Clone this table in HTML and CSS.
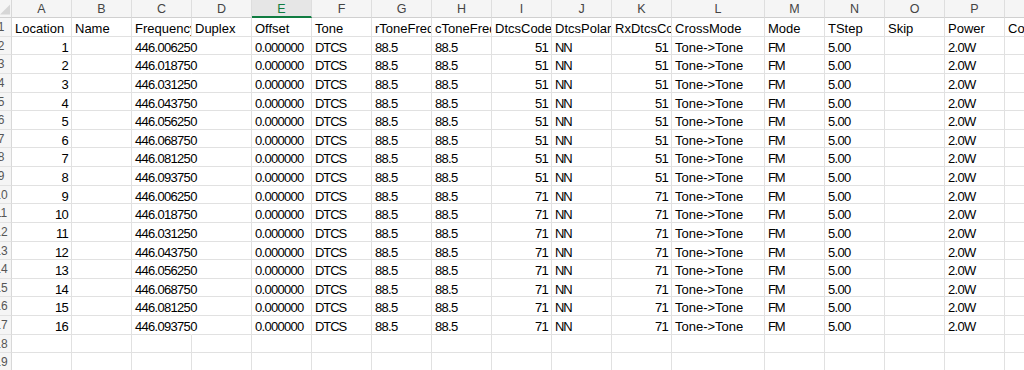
FILE: index.html
```html
<!DOCTYPE html>
<html>
<head>
<meta charset="utf-8">
<link rel="stylesheet" href="styles.css">
</head>
<body>
<div class="sheet">
  <div class="row hdr">
    <div class="corner"><svg width="12" height="17" viewBox="0 0 12 17"><polygon points="11,4 11,15 0,15" fill="#d6d6d6"/></svg></div>
    <div class="ch">A</div><div class="ch">B</div><div class="ch">C</div><div class="ch">D</div><div class="ch sel">E</div><div class="ch">F</div><div class="ch">G</div><div class="ch">H</div><div class="ch">I</div><div class="ch">J</div><div class="ch">K</div><div class="ch wide">L</div><div class="ch">M</div><div class="ch">N</div><div class="ch">O</div><div class="ch">P</div><div class="ch">Q</div>
  </div>
  <div class="row">
    <div class="rh"><span>1</span></div>
    <div class="c">Location</div><div class="c">Name</div><div class="c">Frequency</div><div class="c">Duplex</div><div class="c">Offset</div><div class="c">Tone</div><div class="c">rToneFreq</div><div class="c">cToneFreq</div><div class="c">DtcsCode</div><div class="c">DtcsPolarity</div><div class="c">RxDtcsCode</div><div class="c wide">CrossMode</div><div class="c">Mode</div><div class="c">TStep</div><div class="c">Skip</div><div class="c">Power</div><div class="c">Comment</div>
  </div>
  <div class="row"><div class="rh"><span>2</span></div><div class="c r n">1</div><div class="c"></div><div class="c ov n">446.006250</div><div class="c"></div><div class="c n">0.000000</div><div class="c k">DTCS</div><div class="c n">88.5</div><div class="c n">88.5</div><div class="c r n">51</div><div class="c k">NN</div><div class="c r n">51</div><div class="c wide">Tone-&gt;Tone</div><div class="c k">FM</div><div class="c n">5.00</div><div class="c"></div><div class="c n">2.0W</div><div class="c"></div></div>
  <div class="row"><div class="rh"><span>3</span></div><div class="c r n">2</div><div class="c"></div><div class="c ov n">446.018750</div><div class="c"></div><div class="c n">0.000000</div><div class="c k">DTCS</div><div class="c n">88.5</div><div class="c n">88.5</div><div class="c r n">51</div><div class="c k">NN</div><div class="c r n">51</div><div class="c wide">Tone-&gt;Tone</div><div class="c k">FM</div><div class="c n">5.00</div><div class="c"></div><div class="c n">2.0W</div><div class="c"></div></div>
  <div class="row"><div class="rh"><span>4</span></div><div class="c r n">3</div><div class="c"></div><div class="c ov n">446.031250</div><div class="c"></div><div class="c n">0.000000</div><div class="c k">DTCS</div><div class="c n">88.5</div><div class="c n">88.5</div><div class="c r n">51</div><div class="c k">NN</div><div class="c r n">51</div><div class="c wide">Tone-&gt;Tone</div><div class="c k">FM</div><div class="c n">5.00</div><div class="c"></div><div class="c n">2.0W</div><div class="c"></div></div>
  <div class="row"><div class="rh"><span>5</span></div><div class="c r n">4</div><div class="c"></div><div class="c ov n">446.043750</div><div class="c"></div><div class="c n">0.000000</div><div class="c k">DTCS</div><div class="c n">88.5</div><div class="c n">88.5</div><div class="c r n">51</div><div class="c k">NN</div><div class="c r n">51</div><div class="c wide">Tone-&gt;Tone</div><div class="c k">FM</div><div class="c n">5.00</div><div class="c"></div><div class="c n">2.0W</div><div class="c"></div></div>
  <div class="row"><div class="rh"><span>6</span></div><div class="c r n">5</div><div class="c"></div><div class="c ov n">446.056250</div><div class="c"></div><div class="c n">0.000000</div><div class="c k">DTCS</div><div class="c n">88.5</div><div class="c n">88.5</div><div class="c r n">51</div><div class="c k">NN</div><div class="c r n">51</div><div class="c wide">Tone-&gt;Tone</div><div class="c k">FM</div><div class="c n">5.00</div><div class="c"></div><div class="c n">2.0W</div><div class="c"></div></div>
  <div class="row"><div class="rh"><span>7</span></div><div class="c r n">6</div><div class="c"></div><div class="c ov n">446.068750</div><div class="c"></div><div class="c n">0.000000</div><div class="c k">DTCS</div><div class="c n">88.5</div><div class="c n">88.5</div><div class="c r n">51</div><div class="c k">NN</div><div class="c r n">51</div><div class="c wide">Tone-&gt;Tone</div><div class="c k">FM</div><div class="c n">5.00</div><div class="c"></div><div class="c n">2.0W</div><div class="c"></div></div>
  <div class="row"><div class="rh"><span>8</span></div><div class="c r n">7</div><div class="c"></div><div class="c ov n">446.081250</div><div class="c"></div><div class="c n">0.000000</div><div class="c k">DTCS</div><div class="c n">88.5</div><div class="c n">88.5</div><div class="c r n">51</div><div class="c k">NN</div><div class="c r n">51</div><div class="c wide">Tone-&gt;Tone</div><div class="c k">FM</div><div class="c n">5.00</div><div class="c"></div><div class="c n">2.0W</div><div class="c"></div></div>
  <div class="row"><div class="rh"><span>9</span></div><div class="c r n">8</div><div class="c"></div><div class="c ov n">446.093750</div><div class="c"></div><div class="c n">0.000000</div><div class="c k">DTCS</div><div class="c n">88.5</div><div class="c n">88.5</div><div class="c r n">51</div><div class="c k">NN</div><div class="c r n">51</div><div class="c wide">Tone-&gt;Tone</div><div class="c k">FM</div><div class="c n">5.00</div><div class="c"></div><div class="c n">2.0W</div><div class="c"></div></div>
  <div class="row"><div class="rh"><span>10</span></div><div class="c r n">9</div><div class="c"></div><div class="c ov n">446.006250</div><div class="c"></div><div class="c n">0.000000</div><div class="c k">DTCS</div><div class="c n">88.5</div><div class="c n">88.5</div><div class="c r n">71</div><div class="c k">NN</div><div class="c r n">71</div><div class="c wide">Tone-&gt;Tone</div><div class="c k">FM</div><div class="c n">5.00</div><div class="c"></div><div class="c n">2.0W</div><div class="c"></div></div>
  <div class="row"><div class="rh"><span>11</span></div><div class="c r n">10</div><div class="c"></div><div class="c ov n">446.018750</div><div class="c"></div><div class="c n">0.000000</div><div class="c k">DTCS</div><div class="c n">88.5</div><div class="c n">88.5</div><div class="c r n">71</div><div class="c k">NN</div><div class="c r n">71</div><div class="c wide">Tone-&gt;Tone</div><div class="c k">FM</div><div class="c n">5.00</div><div class="c"></div><div class="c n">2.0W</div><div class="c"></div></div>
  <div class="row"><div class="rh"><span>12</span></div><div class="c r n">11</div><div class="c"></div><div class="c ov n">446.031250</div><div class="c"></div><div class="c n">0.000000</div><div class="c k">DTCS</div><div class="c n">88.5</div><div class="c n">88.5</div><div class="c r n">71</div><div class="c k">NN</div><div class="c r n">71</div><div class="c wide">Tone-&gt;Tone</div><div class="c k">FM</div><div class="c n">5.00</div><div class="c"></div><div class="c n">2.0W</div><div class="c"></div></div>
  <div class="row"><div class="rh"><span>13</span></div><div class="c r n">12</div><div class="c"></div><div class="c ov n">446.043750</div><div class="c"></div><div class="c n">0.000000</div><div class="c k">DTCS</div><div class="c n">88.5</div><div class="c n">88.5</div><div class="c r n">71</div><div class="c k">NN</div><div class="c r n">71</div><div class="c wide">Tone-&gt;Tone</div><div class="c k">FM</div><div class="c n">5.00</div><div class="c"></div><div class="c n">2.0W</div><div class="c"></div></div>
  <div class="row"><div class="rh"><span>14</span></div><div class="c r n">13</div><div class="c"></div><div class="c ov n">446.056250</div><div class="c"></div><div class="c n">0.000000</div><div class="c k">DTCS</div><div class="c n">88.5</div><div class="c n">88.5</div><div class="c r n">71</div><div class="c k">NN</div><div class="c r n">71</div><div class="c wide">Tone-&gt;Tone</div><div class="c k">FM</div><div class="c n">5.00</div><div class="c"></div><div class="c n">2.0W</div><div class="c"></div></div>
  <div class="row"><div class="rh"><span>15</span></div><div class="c r n">14</div><div class="c"></div><div class="c ov n">446.068750</div><div class="c"></div><div class="c n">0.000000</div><div class="c k">DTCS</div><div class="c n">88.5</div><div class="c n">88.5</div><div class="c r n">71</div><div class="c k">NN</div><div class="c r n">71</div><div class="c wide">Tone-&gt;Tone</div><div class="c k">FM</div><div class="c n">5.00</div><div class="c"></div><div class="c n">2.0W</div><div class="c"></div></div>
  <div class="row"><div class="rh"><span>16</span></div><div class="c r n">15</div><div class="c"></div><div class="c ov n">446.081250</div><div class="c"></div><div class="c n">0.000000</div><div class="c k">DTCS</div><div class="c n">88.5</div><div class="c n">88.5</div><div class="c r n">71</div><div class="c k">NN</div><div class="c r n">71</div><div class="c wide">Tone-&gt;Tone</div><div class="c k">FM</div><div class="c n">5.00</div><div class="c"></div><div class="c n">2.0W</div><div class="c"></div></div>
  <div class="row"><div class="rh"><span>17</span></div><div class="c r n">16</div><div class="c"></div><div class="c ov n">446.093750</div><div class="c"></div><div class="c n">0.000000</div><div class="c k">DTCS</div><div class="c n">88.5</div><div class="c n">88.5</div><div class="c r n">71</div><div class="c k">NN</div><div class="c r n">71</div><div class="c wide">Tone-&gt;Tone</div><div class="c k">FM</div><div class="c n">5.00</div><div class="c"></div><div class="c n">2.0W</div><div class="c"></div></div>
  <div class="row"><div class="rh"><span>18</span></div><div class="c"></div><div class="c"></div><div class="c"></div><div class="c"></div><div class="c"></div><div class="c"></div><div class="c"></div><div class="c"></div><div class="c"></div><div class="c"></div><div class="c"></div><div class="c wide"></div><div class="c"></div><div class="c"></div><div class="c"></div><div class="c"></div><div class="c"></div></div>
  <div class="row"><div class="rh"><span>19</span></div><div class="c"></div><div class="c"></div><div class="c"></div><div class="c"></div><div class="c"></div><div class="c"></div><div class="c"></div><div class="c"></div><div class="c"></div><div class="c"></div><div class="c"></div><div class="c wide"></div><div class="c"></div><div class="c"></div><div class="c"></div><div class="c"></div><div class="c"></div></div>
</div>
</body>
</html>
```
FILE: styles.css
```css
html, body {
  margin: 0;
  padding: 0;
  background: #ffffff;
  overflow: hidden;
}
body {
  width: 1024px;
  height: 370px;
  font-family: "Liberation Sans", Arial, sans-serif;
  color: #000;
}
.sheet {
  display: flex;
  flex-direction: column;
  width: 1100px;
}
.row {
  display: flex;
  height: 18.625px;
  flex: none;
}
.row.hdr {
  height: 18px;
  background: #f5f5f5;
}
.corner {
  width: 12px;
  flex: none;
  box-sizing: border-box;
  border-right: 1px solid #d8d8d8;
  border-bottom: 1px solid #d0d0d0;
  display: flex;
}
.ch {
  width: 60px;
  flex: none;
  box-sizing: border-box;
  border-right: 1px solid #dedede;
  border-bottom: 1px solid #d0d0d0;
  text-align: center;
  font-size: 12.5px;
  line-height: 18px;
  color: #444;
}
.ch.sel {
  color: #107c41;
  background: #e6e6e6;
  border-bottom: 2px solid #107c41;
}
.ch.wide, .c.wide {
  width: 93px;
}
.rh {
  width: 12px;
  flex: none;
  box-sizing: border-box;
  background: #f5f5f5;
  border-right: 1px solid #d8d8d8;
  border-bottom: 1px solid #e2e2e2;
  display: flex;
  overflow: hidden;
}
.rh span {
  width: 2px;
  flex: none;
  display: flex;
  justify-content: center;
  font-size: 12px;
  line-height: 19px;
  color: #555;
  white-space: nowrap;
}
.c {
  width: 60px;
  flex: none;
  box-sizing: border-box;
  border-right: 1px solid #e1e1e1;
  border-bottom: 1px solid #e1e1e1;
  padding: 1px 3px 0 3px;
  font-size: 13px;
  line-height: 19px;
  white-space: nowrap;
  overflow: hidden;
}
.c.r {
  text-align: right;
}
.c.ov {
  overflow: visible;
  border-right-color: transparent;
}
.c.n {
  letter-spacing: -0.7px;
}
.c.k {
  letter-spacing: -1.1px;
}
```
